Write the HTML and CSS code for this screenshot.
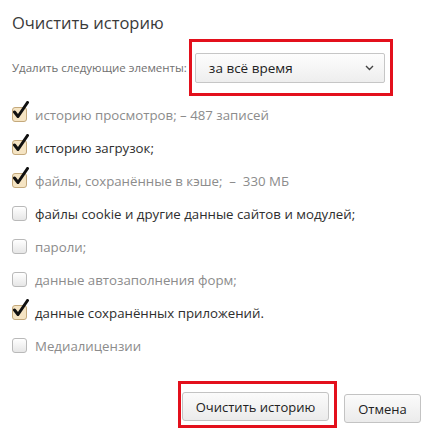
FILE: index.html
```html
<!DOCTYPE html>
<html lang="ru">
<head>
<meta charset="utf-8">
<link rel="stylesheet" href="styles.css">
</head>
<body>
<div class="dialog">
  <h1 class="title">Очистить историю</h1>
  <div class="period">
    <span class="period-label">Удалить следующие элементы:</span>
    <div class="highlight highlight-select">
      <div class="select">
        <span class="select-value">за всё время</span>
        <svg class="chevron" width="9" height="6" viewBox="0 0 9 6"><polyline points="1,1 4.5,4.5 8,1" fill="none" stroke="#444" stroke-width="1.4"/></svg>
      </div>
    </div>
  </div>
  <ul class="items">
    <li class="item muted"><span class="cb checked"><svg class="tick" width="18" height="20" viewBox="0 0 18 20"><path d="M2.5 11 L6 15.5 L15.5 1.5" fill="none" stroke="#111" stroke-width="3" stroke-linecap="round" stroke-linejoin="round"/></svg></span>историю просмотров; – 487 записей</li>
    <li class="item"><span class="cb checked"><svg class="tick" width="18" height="20" viewBox="0 0 18 20"><path d="M2.5 11 L6 15.5 L15.5 1.5" fill="none" stroke="#111" stroke-width="3" stroke-linecap="round" stroke-linejoin="round"/></svg></span>историю загрузок;</li>
    <li class="item muted"><span class="cb checked"><svg class="tick" width="18" height="20" viewBox="0 0 18 20"><path d="M2.5 11 L6 15.5 L15.5 1.5" fill="none" stroke="#111" stroke-width="3" stroke-linecap="round" stroke-linejoin="round"/></svg></span>файлы, сохранённые в кэше; &nbsp;– &nbsp;330 МБ</li>
    <li class="item"><span class="cb"></span>файлы cookie и другие данные сайтов и модулей;</li>
    <li class="item muted"><span class="cb"></span>пароли;</li>
    <li class="item muted"><span class="cb"></span>данные автозаполнения форм;</li>
    <li class="item"><span class="cb checked"><svg class="tick" width="18" height="20" viewBox="0 0 18 20"><path d="M2.5 11 L6 15.5 L15.5 1.5" fill="none" stroke="#111" stroke-width="3" stroke-linecap="round" stroke-linejoin="round"/></svg></span>данные сохранённых приложений.</li>
    <li class="item muted"><span class="cb"></span>Медиалицензии</li>
  </ul>
  <div class="actions">
    <div class="highlight highlight-btn">
      <button class="btn btn-clear">Очистить историю</button>
    </div>
    <button class="btn btn-cancel">Отмена</button>
  </div>
</div>
</body>
</html>
```
FILE: styles.css
```css
html, body {
  margin: 0;
  padding: 0;
  background: #fff;
}
body {
  font-family: "Open Sans", "Noto Sans", sans-serif;
  color: #333;
  width: 434px;
  height: 432px;
  overflow: hidden;
}
.dialog {
  padding: 13px 13px 0 12px;
}
.title {
  margin: 0;
  font-size: 16.5px;
  font-weight: 400;
  line-height: 20px;
  color: #3a3a3a;
}
.period {
  display: flex;
  align-items: center;
  margin-top: 6px;
}
.period-label {
  font-size: 11.5px;
  color: #707070;
  margin-right: 2px;
}
.highlight {
  border: 3px solid #e3101c;
}
.highlight-select {
  padding: 11px 5px 10px 3px;
}
.select {
  border: 1px solid #c6c6c6;
  border-radius: 2px;
  background: linear-gradient(#fdfdfd, #eeeeee);
  display: flex;
  align-items: center;
  justify-content: space-between;
  padding: 0 10px 0 13px;
  box-sizing: border-box;
  height: 30px;
  width: 190px;
}
.select-value {
  font-size: 13.5px;
  color: #222;
}
.items {
  list-style: none;
  margin: 2px 0 0;
  padding: 0;
}
.item {
  display: flex;
  align-items: center;
  height: 33px;
  font-size: 13.25px;
  color: #2e2e2e;
}
.item.muted {
  color: #8c8c8c;
}
.cb {
  position: relative;
  flex: none;
  width: 13px;
  height: 13px;
  border: 1px solid #b9b9b9;
  border-radius: 3px;
  background: linear-gradient(#ffffff, #e6e6e6);
  margin-right: 8px;
}
.cb.checked {
  background: #f5e4c3;
  border-color: #c4a97c;
}
.tick {
  position: absolute;
  left: -1px;
  top: -7px;
}
.actions {
  display: flex;
  justify-content: flex-end;
  align-items: center;
  margin-top: 19px;
}
.highlight-btn {
  padding: 8px 5px 4px 1px;
  margin-right: 7px;
}
.btn {
  font-family: inherit;
  font-size: 13px;
  color: #222;
  height: 29px;
  border: 1px solid #c3c3c3;
  border-radius: 3px;
  background: linear-gradient(#fbfbfb, #ebebeb);
  padding: 0;
}
.btn-clear {
  width: 147px;
}
.btn-cancel {
  width: 77px;
  margin-top: 8px;
}
```
